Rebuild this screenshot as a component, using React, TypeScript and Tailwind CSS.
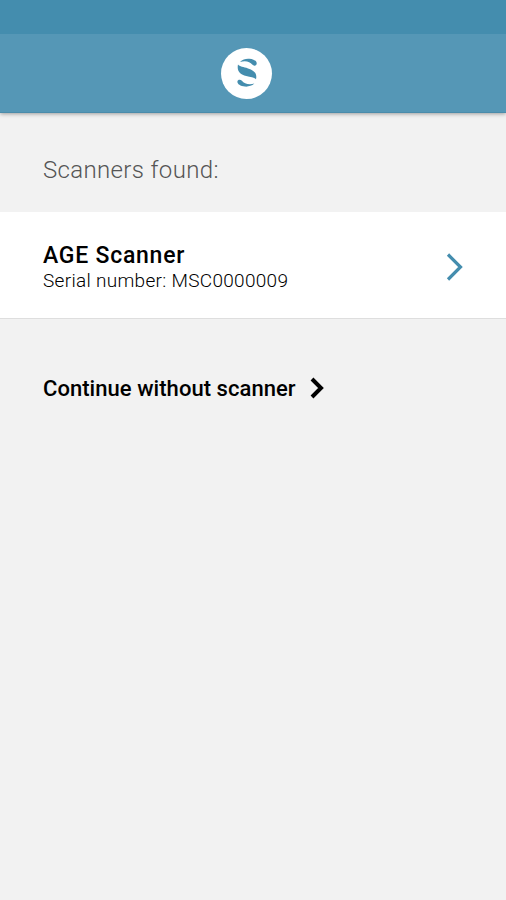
type Scanner = {
  name: string;
  serial: string;
};

const scanners: Scanner[] = [{ name: "AGE Scanner", serial: "MSC0000009" }];

function Logo() {
  return (
    <svg width="52" height="52" viewBox="0 0 52 52" aria-hidden="true">
      <circle cx="25.5" cy="26.5" r="25.5" fill="#fff" />
      <g fill="#448dae">
        <path d="M19 15C21.6 12.2 25 11.4 28.4 11.7C33 12 36 14.2 35.7 16.8C35.5 19 32.6 19.4 31.2 17.6C29 14.8 24.8 13.2 19 15Z" />
        <path d="M17 17.6C18.6 19.8 22.6 20 27 21.4C32.8 23.2 36.4 26 35 32.2C33 30.2 29.6 30.2 25.2 29C19.2 27.4 15.6 24 17 17.6Z" />
        <path d="M33.4 36.6C30.8 39 27.4 39.8 24 39.6C19.4 39.3 16.2 37.2 16.4 34.6C16.6 32.4 19.4 32 20.9 33.8C23.2 36.6 27.6 38.2 33.4 36.6Z" />
      </g>
    </svg>
  );
}

function ScannerRow({ name, serial }: Scanner) {
  return (
    <button className="flex h-[107px] w-full items-center justify-between border-b border-[#dedede] bg-white pt-1 pr-[42px] pl-[43px] text-left">
      <span className="flex flex-col whitespace-nowrap text-black">
        <span className="h-[27px] text-[23px] leading-[27px] font-medium tracking-[0.75px]">
          {name}
        </span>
        <span className="h-[24px] text-[19px] leading-[24px] font-light tracking-[0.3px]">
          Serial number: {serial}
        </span>
      </span>
      <svg width="18" height="28" viewBox="0 0 18 28" fill="none" aria-hidden="true">
        <path d="M2 1.5L14.5 14L2 26.5" stroke="#448dae" strokeWidth="3.2" />
      </svg>
    </button>
  );
}

export default function App() {
  return (
    <main className="min-h-screen bg-[#f2f2f2] font-['Roboto',sans-serif]">
      {/* Status bar and toolbar */}
      <header className="h-[113px] border-b border-[#4b8cab] bg-[#5597b6] shadow-[0_1px_4px_rgba(0,0,0,0.35)]">
        <div className="h-[34px] bg-[#448dae]" />
        <div className="flex h-[78px] justify-center pt-[13px] pr-[13px]">
          <Logo />
        </div>
      </header>

      {/* Scanner list */}
      <h1 className="flex h-[99px] items-center pt-[15px] pl-[43px] text-[24px] font-light tracking-[0.35px] text-[#555]">
        Scanners found:
      </h1>
      {scanners.map((scanner) => (
        <ScannerRow key={scanner.serial} {...scanner} />
      ))}

      <button className="mt-[53px] flex h-8 items-center gap-[14px] pl-[43px] text-[22px] font-medium tracking-[0.05px] whitespace-nowrap text-black">
        Continue without scanner
        <svg width="16" height="22" viewBox="0 0 16 22" fill="none" aria-hidden="true">
          <path d="M2 2L11 11L2 20" stroke="#000" strokeWidth="4" />
        </svg>
      </button>
    </main>
  );
}
